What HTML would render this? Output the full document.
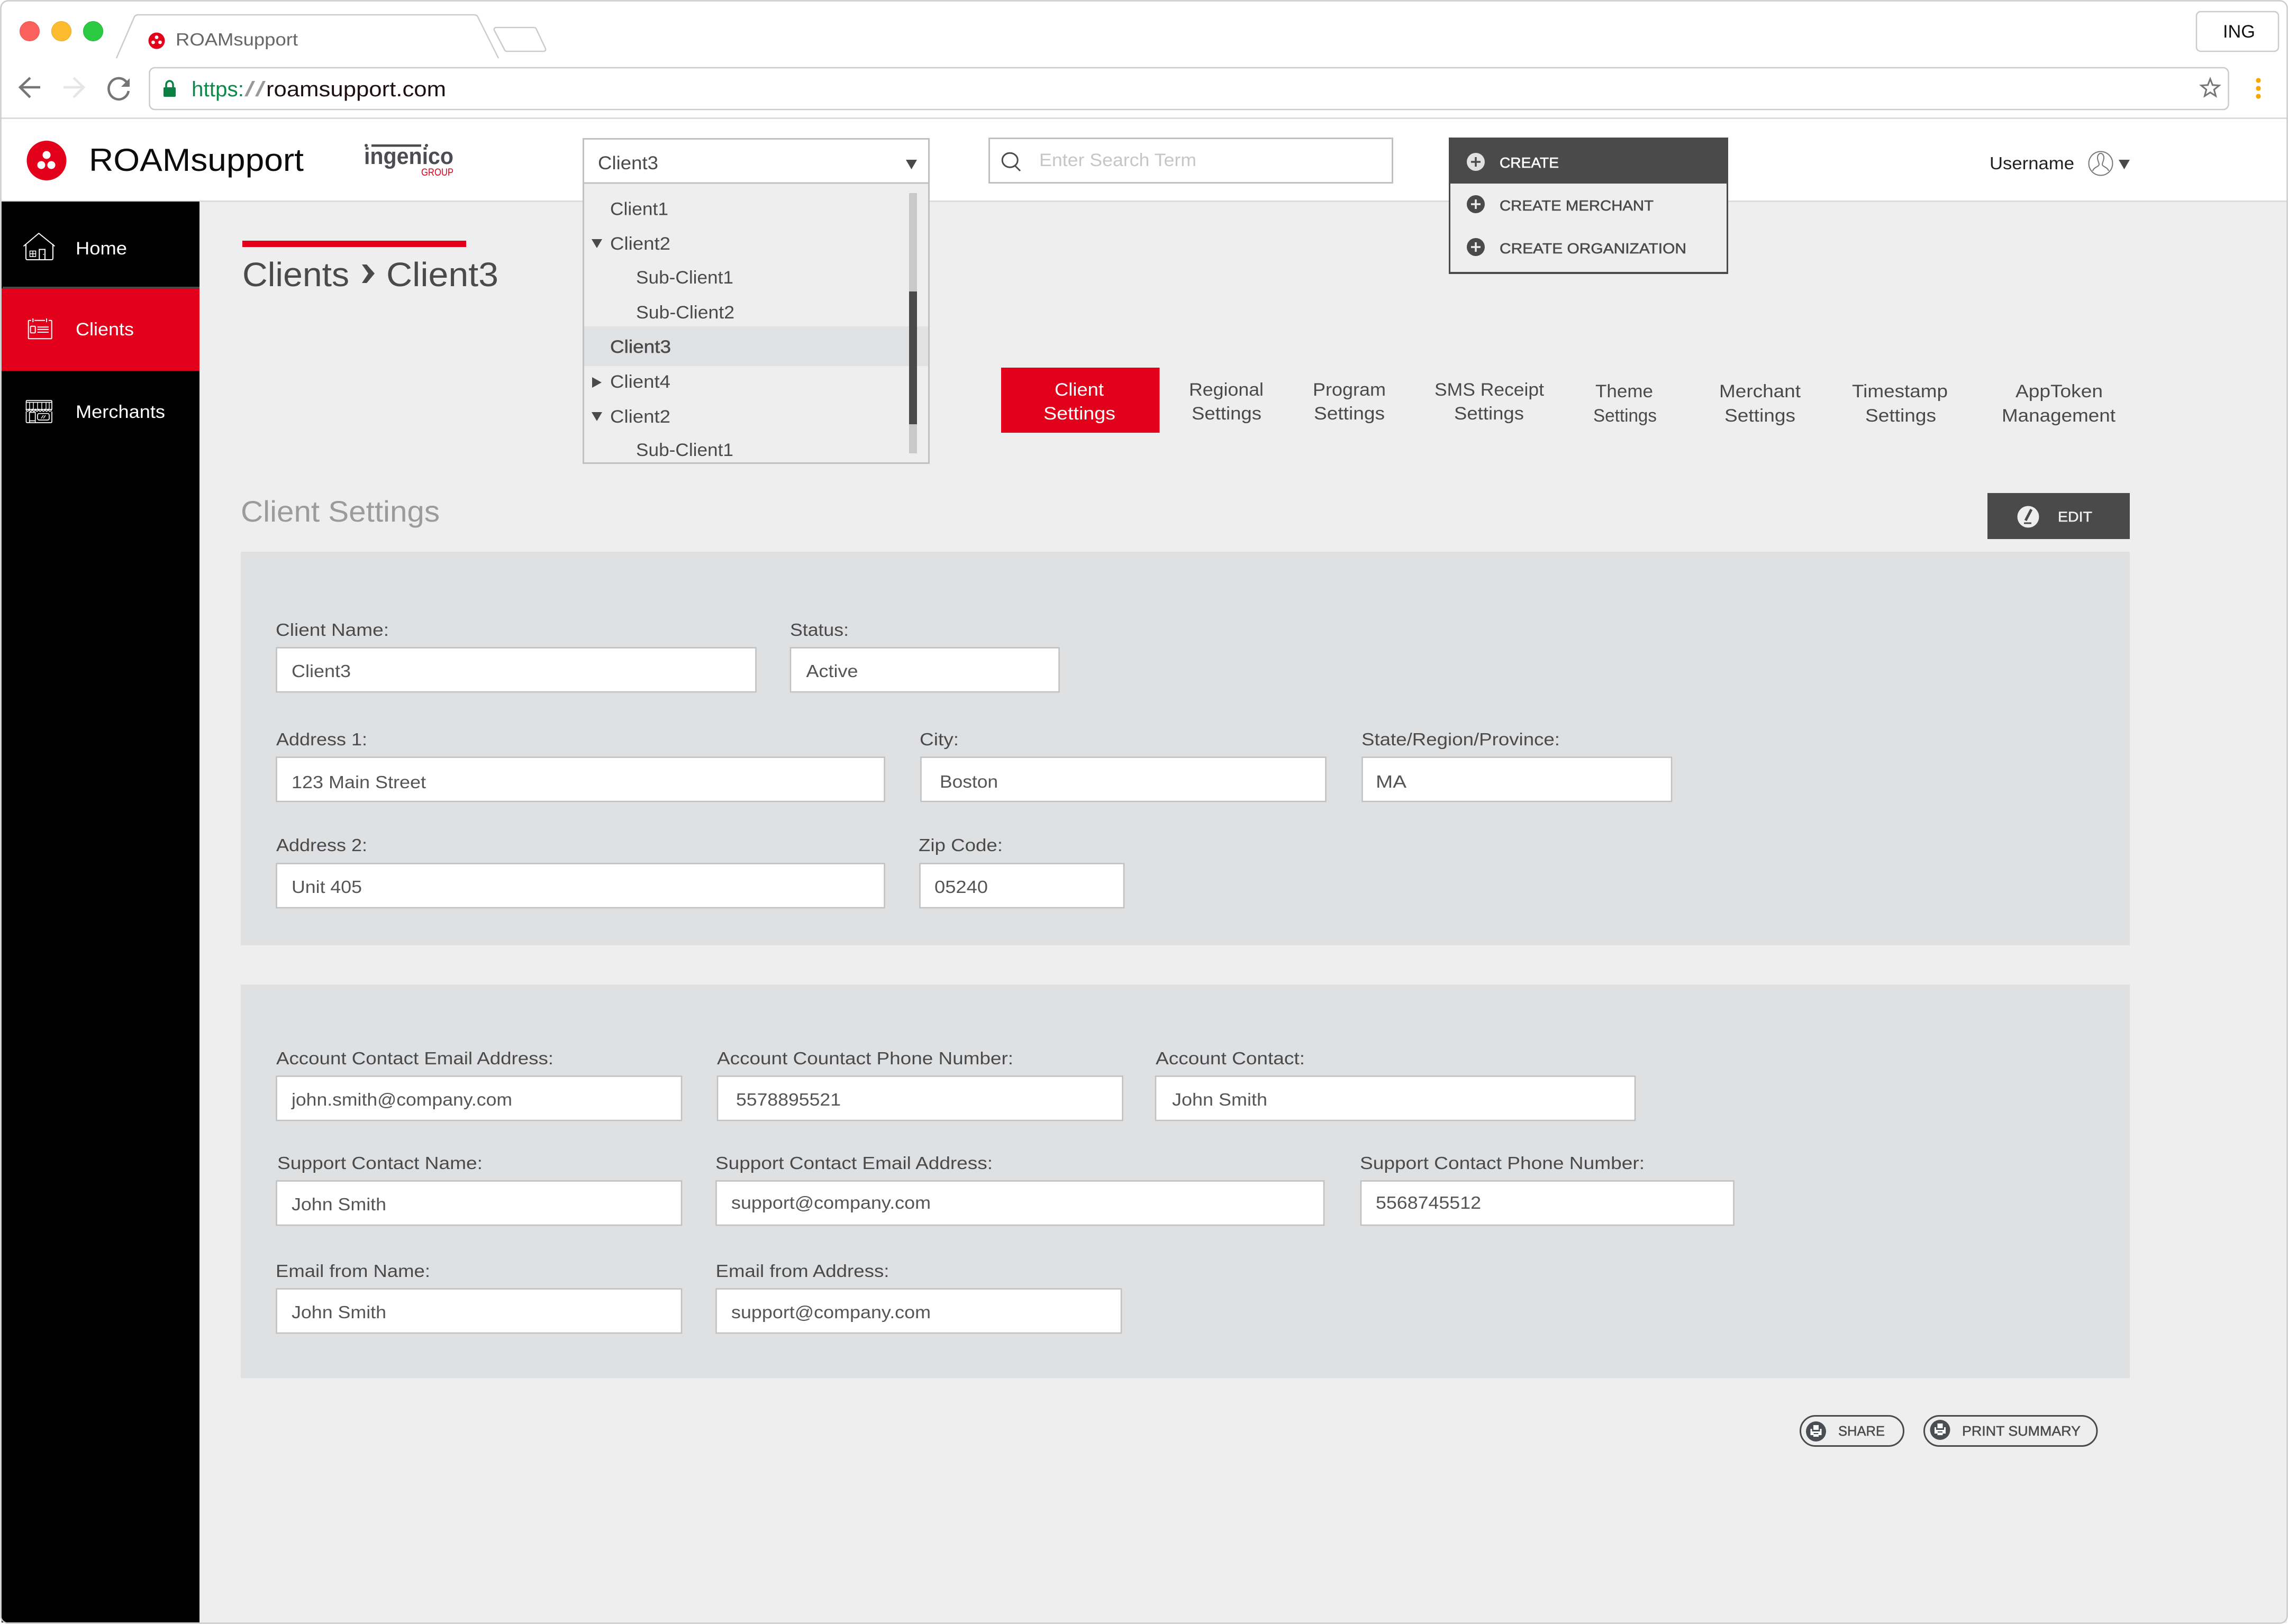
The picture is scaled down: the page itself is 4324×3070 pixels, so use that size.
<!DOCTYPE html>
<html lang="en"><head><meta charset="utf-8"><title>ROAMsupport</title>
<style>
html,body{margin:0;padding:0;background:#fff;width:4324px;height:3070px;overflow:hidden}
svg{display:block}
text{font-family:"Liberation Sans",sans-serif;fill:#4a4a4a;font-size:33px}
.v{fill:#555}
.i{fill:#fff;stroke:#c0c0c0;stroke-width:2.5}
.n{fill:#fff;font-size:34px}
.tb{font-size:34px;text-anchor:start}
.c{font-size:28px;stroke:#4a4a4a;stroke-width:.6}
.w{fill:none;stroke:#fff;stroke-width:2}
</style></head><body>
<svg xmlns="http://www.w3.org/2000/svg" width="4324" height="3070" viewBox="0 0 4324 3070">
<rect width="4324" height="3070" fill="#fff"/>
<!-- main -->
<rect x="377" y="380" width="3945" height="2688" fill="#eeeeee"/>
<rect x="3" y="379" width="4319" height="3" fill="#dcdcdc"/>
<rect x="3" y="381" width="374" height="2686" fill="#000"/>
<rect x="0" y="222" width="4324" height="3" fill="#dcdcdc"/>
<rect x="1.5" y="1.5" width="4321" height="3067" rx="14" fill="none" stroke="#cbcbcb" stroke-width="2.5"/>
<!-- browser chrome -->
<circle cx="56" cy="59" r="18.5" fill="#fc615d" stroke="#e9564f" stroke-width="1"/>
<circle cx="116" cy="59" r="18.5" fill="#fdbc2e" stroke="#e8a825" stroke-width="1"/>
<circle cx="176" cy="59" r="18.5" fill="#2acb42" stroke="#24b03a" stroke-width="1"/>
<path d="M220 110L253 34Q255 28 261 28H896Q902 28 904 34L942 110" fill="none" stroke="#cbcbcb" stroke-width="2.5"/>
<path d="M934 57Q933 52 938 52H1009Q1013 52 1014 56L1031 92Q1032 97 1027 97H958Q954 97 953 93Z" fill="none" stroke="#cbcbcb" stroke-width="2.5"/>
<circle cx="296" cy="77" r="15.5" fill="#e2001a"/>
<circle cx="296" cy="70.5" r="3.4" fill="#fff"/><circle cx="289.5" cy="80" r="3.4" fill="#fff"/><circle cx="302.5" cy="80" r="3.4" fill="#fff"/>
<text x="332" y="86" style="font-size:33px;fill:#666" textLength="231" lengthAdjust="spacingAndGlyphs">ROAMsupport</text>
<rect x="4151" y="22" width="155" height="75" rx="8" fill="#fff" stroke="#cbcbcb" stroke-width="2.5"/>
<text x="4201" y="71" style="font-size:34px;fill:#111" textLength="61" lengthAdjust="spacingAndGlyphs">ING</text>
<path d="M76 165H40M57 147L38 165L57 184" fill="none" stroke="#757575" stroke-width="4.5"/>
<path d="M158 165H120M139 147L158 165L139 184" fill="none" stroke="#e6e6e6" stroke-width="4.5"/>
<path d="M239 155A19 20 0 1 0 243 172" fill="none" stroke="#757575" stroke-width="4.5"/>
<polygon points="245,148 245,164 229,164" fill="#757575"/>
<rect x="282.5" y="128" width="3929" height="79" rx="10" fill="#fff" stroke="#cbcbcb" stroke-width="2.5"/>
<rect x="309" y="165" width="23" height="18" rx="2" fill="#0b8043"/>
<path d="M314 166V160A6.5 7 0 0 1 327 160V166" fill="none" stroke="#0b8043" stroke-width="3.5"/>
<text x="362" y="182" style="font-size:40px;fill:#0b8a4a" textLength="99" lengthAdjust="spacingAndGlyphs">https:</text>
<text x="462" y="182" style="font-size:40px;fill:#999" textLength="40" lengthAdjust="spacingAndGlyphs">//</text>
<text x="503" y="182" style="font-size:40px;fill:#1c1012" textLength="340" lengthAdjust="spacingAndGlyphs">roamsupport.com</text>
<polygon points="4177,149.2 4181.5,160.8 4194,161.5 4184.3,169.4 4187.5,181.5 4177,174.7 4166.5,181.5 4169.7,169.4 4160,161.5 4172.5,160.8" fill="#fff" stroke="#757575" stroke-width="3"/>
<circle cx="4268" cy="152" r="4.6" fill="#f5a800"/><circle cx="4268" cy="167" r="4.6" fill="#f5a800"/><circle cx="4268" cy="182" r="4.6" fill="#f5a800"/>
<!-- header -->
<circle cx="88" cy="303.5" r="37.5" fill="#e2001a"/>
<circle cx="88" cy="293" r="7.5" fill="#fff"/><circle cx="78" cy="312" r="7.5" fill="#fff"/><circle cx="97" cy="312" r="7.5" fill="#fff"/>
<text x="168" y="323" style="font-size:60px;fill:#0c0c0c" textLength="406" lengthAdjust="spacingAndGlyphs">ROAMsupport</text>
<rect x="702" y="273" width="94" height="4.5" fill="#4b4d52"/><circle cx="692" cy="275" r="3" fill="#4b4d52"/><circle cx="806" cy="275" r="3" fill="#4b4d52"/>
<text x="688" y="310" style="font-size:44px;font-weight:bold;fill:#4b4d52" textLength="169" lengthAdjust="spacingAndGlyphs">ingenico</text>
<text x="796" y="332" style="font-size:19px;fill:#e2001a" textLength="61" lengthAdjust="spacingAndGlyphs">GROUP</text>
<!-- search -->
<rect x="1869.5" y="261.5" width="762" height="84" fill="#fff" stroke="#c0c0c0" stroke-width="3"/>
<ellipse cx="1908.7" cy="302.7" rx="14.5" ry="13.5" fill="none" stroke="#4a4a4a" stroke-width="3"/>
<line x1="1918" y1="313" x2="1928" y2="323" stroke="#4a4a4a" stroke-width="3"/>
<text x="1964" y="314" style="font-size:34px;fill:#c6c6c6" textLength="297" lengthAdjust="spacingAndGlyphs">Enter Search Term</text>
<!-- create menu -->
<rect x="2739.5" y="261.5" width="525" height="255" fill="#eeeeee" stroke="#4a4a4a" stroke-width="3"/>
<rect x="2738" y="260" width="528" height="87" fill="#4a4a4a"/>
<rect x="2738" y="514" width="528" height="4" fill="#4a4a4a"/>
<circle cx="2789" cy="306" r="17" fill="#e0e1e3"/><path d="M2780 306h18M2789 297v18" stroke="#4a4a4a" stroke-width="3.5"/>
<text x="2834" y="317" style="fill:#fff;font-size:28px;stroke:#fff;stroke-width:.6" textLength="112" lengthAdjust="spacingAndGlyphs">CREATE</text>
<circle cx="2789" cy="386" r="17" fill="#4a4a4a"/><path d="M2780 386h18M2789 377v18" stroke="#eee" stroke-width="3.5"/>
<text class="c" x="2834" y="398" textLength="291" lengthAdjust="spacingAndGlyphs">CREATE MERCHANT</text>
<circle cx="2789" cy="467" r="17" fill="#4a4a4a"/><path d="M2780 467h18M2789 458v18" stroke="#eee" stroke-width="3.5"/>
<text class="c" x="2834" y="479" textLength="353" lengthAdjust="spacingAndGlyphs">CREATE ORGANIZATION</text>
<!-- username -->
<text x="3760" y="320" style="font-size:33px;fill:#222" textLength="160" lengthAdjust="spacingAndGlyphs">Username</text>
<circle cx="3970" cy="309" r="22.5" fill="none" stroke="#777" stroke-width="2"/>
<path d="M3964 298a6 8 0 0 1 12 0c0 6-3 9-3 13c0 4 10 5 12 12M3964 298c0 6 3 9 3 13c0 4-10 5-12 12" fill="none" stroke="#777" stroke-width="2"/>
<polygon points="4004,302 4025,302 4014.5,320" fill="#4a4a4a"/>
<!-- sidebar -->
<rect x="5" y="542" width="372" height="3" fill="#4a4a4a"/>
<rect x="3" y="545" width="374" height="156" fill="#e2001a"/>
<path class="w" d="M44.5 465.5L73.3 441L103.5 465.5M49 461V488Q49 491 52 491H97Q100 491 100 488V461M74.3 491V471.5H85V491"/>
<path class="w" d="M56.5 474.5h11v10.5h-11zM62 474.5v10.5M56.5 479.7h11" style="stroke-width:1.5"/>
<circle cx="82.3" cy="480.7" r="1" fill="#fff"/>
<text class="n" x="143" y="481" textLength="97" lengthAdjust="spacingAndGlyphs">Home</text>
<path class="w" d="M59 605.7H55Q53.7 605.7 53.7 607V639Q53.7 640.3 55 640.3H96.4Q97.7 640.3 97.7 639V607Q97.7 605.7 96.4 605.7H92M65 605.7H85M62.3 602V609M88 602V609"/>
<rect class="w" x="57.7" y="616.7" width="9" height="12.6" rx="1.5"/>
<path class="w" d="M70.7 618.3H92M70.7 622.7H92M70.7 628H92" />
<text class="n" x="143" y="634" textLength="110" lengthAdjust="spacingAndGlyphs">Clients</text>
<path class="w" d="M49.5 774V759Q49.5 757 51.5 757H96Q98 757 98 759V774M49 774Q52 781 55 774Q58 781 61 774Q64 781 67 774Q70 781 73 774Q76 781 79 774Q82 781 85 774Q88 781 91 774Q94 781 98 774M49 774H98M49 760.5H98" style="stroke-width:1.7"/>
<path class="w" d="M56 761V774M63 761V774M71 761V774M79 761V774M87 761V774M93 761V774" style="stroke-width:1.4"/>
<path class="w" d="M49.5 778V797Q49.5 799 51.5 799H96Q98 799 98 797V778M55.7 799V779.5H66.7V799M55.7 795.5H66.7" style="stroke-width:1.7"/>
<rect class="w" x="71" y="781.7" width="22" height="12.3" rx="3" style="stroke-width:1.7"/>
<path class="w" d="M78 791L82 785M82 791L86 785" style="stroke-width:1.4"/>
<text class="n" x="143" y="790" textLength="169" lengthAdjust="spacingAndGlyphs">Merchants</text>
<!-- title -->
<rect x="458" y="455" width="423" height="12" fill="#e2001a"/>
<text x="458" y="541" style="font-size:64px" textLength="202" lengthAdjust="spacingAndGlyphs">Clients</text>
<polygon points="684,500 693,500 708,517 693,535 684,535 696,517" fill="#4a4a4a"/>
<text x="730" y="541" style="font-size:64px" textLength="212" lengthAdjust="spacingAndGlyphs">Client3</text>
<text x="455" y="986" style="font-size:56px;fill:#9b9b9b" textLength="376" lengthAdjust="spacingAndGlyphs">Client Settings</text>
<!-- tabs -->
<rect x="1892" y="695" width="299.5" height="123" fill="#e2001a"/>
<text x="1993" y="748" style="font-size:34px;fill:#fff" textLength="93" lengthAdjust="spacingAndGlyphs">Client</text>
<text x="1972" y="793" style="font-size:34px;fill:#fff" textLength="136" lengthAdjust="spacingAndGlyphs">Settings</text>
<text class="tb" x="2247" y="748" textLength="141" lengthAdjust="spacingAndGlyphs">Regional</text>
<text class="tb" x="2252" y="793" textLength="132" lengthAdjust="spacingAndGlyphs">Settings</text>
<text class="tb" x="2481" y="748" textLength="138" lengthAdjust="spacingAndGlyphs">Program</text>
<text class="tb" x="2483" y="793" textLength="134" lengthAdjust="spacingAndGlyphs">Settings</text>
<text class="tb" x="2711" y="748" textLength="207" lengthAdjust="spacingAndGlyphs">SMS Receipt</text>
<text class="tb" x="2748" y="793" textLength="132" lengthAdjust="spacingAndGlyphs">Settings</text>
<text class="tb" x="3015" y="751" textLength="109" lengthAdjust="spacingAndGlyphs">Theme</text>
<text class="tb" x="3011" y="797" textLength="120" lengthAdjust="spacingAndGlyphs">Settings</text>
<text class="tb" x="3249" y="751" textLength="154" lengthAdjust="spacingAndGlyphs">Merchant</text>
<text class="tb" x="3259" y="797" textLength="134" lengthAdjust="spacingAndGlyphs">Settings</text>
<text class="tb" x="3500" y="751" textLength="181" lengthAdjust="spacingAndGlyphs">Timestamp</text>
<text class="tb" x="3525" y="797" textLength="134" lengthAdjust="spacingAndGlyphs">Settings</text>
<text class="tb" x="3809" y="751" textLength="165" lengthAdjust="spacingAndGlyphs">AppToken</text>
<text class="tb" x="3783" y="797" textLength="215" lengthAdjust="spacingAndGlyphs">Management</text>
<!-- edit -->
<rect x="3756" y="932" width="269" height="87" fill="#4a4a4a"/>
<circle cx="3833" cy="977" r="20.5" fill="#eee"/>
<path d="M3839 963L3828 984" stroke="#4a4a4a" stroke-width="5"/><path d="M3825 989H3839" stroke="#4a4a4a" stroke-width="3"/>
<text x="3889" y="986" style="font-size:27px;fill:#eee;stroke:#eee;stroke-width:.6" textLength="65" lengthAdjust="spacingAndGlyphs">EDIT</text>
<!-- panel 1 -->
<rect x="455" y="1043" width="3570" height="744" fill="#dfe0e2"/>
<text x="521" y="1202" textLength="214" lengthAdjust="spacingAndGlyphs">Client Name:</text>
<rect class="i" x="522.5" y="1224.5" width="906" height="83.5"/>
<text class="v" x="551" y="1280" textLength="112" lengthAdjust="spacingAndGlyphs">Client3</text>
<text x="1493" y="1202" textLength="111" lengthAdjust="spacingAndGlyphs">Status:</text>
<rect class="i" x="1494" y="1224.5" width="507.5" height="83.5"/>
<text class="v" x="1523.5" y="1280" textLength="98" lengthAdjust="spacingAndGlyphs">Active</text>
<text x="522" y="1409" textLength="172" lengthAdjust="spacingAndGlyphs">Address 1:</text>
<rect class="i" x="522.5" y="1431.5" width="1149" height="83.5"/>
<text class="v" x="551" y="1490" textLength="254" lengthAdjust="spacingAndGlyphs">123 Main Street</text>
<text x="1738" y="1409" textLength="74" lengthAdjust="spacingAndGlyphs">City:</text>
<rect class="i" x="1740.5" y="1431.5" width="765" height="83.5"/>
<text class="v" x="1776" y="1489" textLength="110" lengthAdjust="spacingAndGlyphs">Boston</text>
<text x="2573" y="1409" textLength="375" lengthAdjust="spacingAndGlyphs">State/Region/Province:</text>
<rect class="i" x="2574.5" y="1431.5" width="584.5" height="83.5"/>
<text class="v" x="2600" y="1489" textLength="58" lengthAdjust="spacingAndGlyphs">MA</text>
<text x="522" y="1609" textLength="172" lengthAdjust="spacingAndGlyphs">Address 2:</text>
<rect class="i" x="522.5" y="1632.5" width="1149" height="83.5"/>
<text class="v" x="551" y="1688" textLength="133" lengthAdjust="spacingAndGlyphs">Unit 405</text>
<text x="1736" y="1609" textLength="159" lengthAdjust="spacingAndGlyphs">Zip Code:</text>
<rect class="i" x="1738.5" y="1632.5" width="385.5" height="83.5"/>
<text class="v" x="1766" y="1688" textLength="101" lengthAdjust="spacingAndGlyphs">05240</text>
<!-- panel 2 -->
<rect x="455" y="1861.5" width="3570" height="744" fill="#dfe0e2"/>
<text x="522" y="2012" textLength="524" lengthAdjust="spacingAndGlyphs">Account Contact Email Address:</text>
<rect class="i" x="522.5" y="2034.5" width="765.5" height="83.5"/>
<text class="v" x="551" y="2090" textLength="417" lengthAdjust="spacingAndGlyphs">john.smith@company.com</text>
<text x="1355" y="2012" textLength="560" lengthAdjust="spacingAndGlyphs">Account Countact Phone Number:</text>
<rect class="i" x="1356" y="2034.5" width="765.5" height="83.5"/>
<text class="v" x="1391" y="2090" textLength="198" lengthAdjust="spacingAndGlyphs">5578895521</text>
<text x="2184" y="2012" textLength="282" lengthAdjust="spacingAndGlyphs">Account Contact:</text>
<rect class="i" x="2184" y="2034.5" width="906" height="83.5"/>
<text class="v" x="2215" y="2090" textLength="180" lengthAdjust="spacingAndGlyphs">John Smith</text>
<text x="524" y="2210" textLength="388" lengthAdjust="spacingAndGlyphs">Support Contact Name:</text>
<rect class="i" x="522.5" y="2232.5" width="765.5" height="83.5"/>
<text class="v" x="551" y="2288" textLength="179" lengthAdjust="spacingAndGlyphs">John Smith</text>
<text x="1352" y="2210" textLength="524" lengthAdjust="spacingAndGlyphs">Support Contact Email Address:</text>
<rect class="i" x="1353.5" y="2232.5" width="1148.5" height="83.5"/>
<text class="v" x="1382" y="2285" textLength="377" lengthAdjust="spacingAndGlyphs">support@company.com</text>
<text x="2570" y="2210" textLength="538" lengthAdjust="spacingAndGlyphs">Support Contact Phone Number:</text>
<rect class="i" x="2572" y="2232.5" width="704.5" height="83.5"/>
<text class="v" x="2600" y="2285" textLength="199" lengthAdjust="spacingAndGlyphs">5568745512</text>
<text x="521" y="2414" textLength="292" lengthAdjust="spacingAndGlyphs">Email from Name:</text>
<rect class="i" x="522.5" y="2436.5" width="765.5" height="83.5"/>
<text class="v" x="551" y="2492" textLength="179" lengthAdjust="spacingAndGlyphs">John Smith</text>
<text x="1352.5" y="2414" textLength="328" lengthAdjust="spacingAndGlyphs">Email from Address:</text>
<rect class="i" x="1353.5" y="2436.5" width="765.5" height="83.5"/>
<text class="v" x="1382" y="2492" textLength="377" lengthAdjust="spacingAndGlyphs">support@company.com</text>
<!-- footer buttons -->
<rect x="3402.5" y="2676.5" width="195" height="57" rx="28.5" fill="none" stroke="#4a4a4a" stroke-width="3"/>
<circle cx="3432" cy="2706" r="19" fill="#4a4d52"/>
<path d="M3427 2694h10v9h-10zM3421.5 2701h3v5h15v-5h3v12h-6v-4h-9v4h-6zM3427 2711h10v5h-10z" fill="#fff"/>
<text x="3474" y="2714" style="font-size:26px;stroke:#4a4a4a;stroke-width:.5" textLength="88" lengthAdjust="spacingAndGlyphs">SHARE</text>
<rect x="3636.5" y="2676.5" width="326.5" height="57" rx="28.5" fill="none" stroke="#4a4a4a" stroke-width="3"/>
<circle cx="3666.5" cy="2703" r="19" fill="#4a4d52"/>
<path d="M3661.5 2691h10v9h-10zM3656 2698h3v5h15v-5h3v12h-6v-4h-9v4h-6zM3661.5 2708h10v5h-10z" fill="#fff"/>
<text x="3708" y="2714" style="font-size:26px;stroke:#4a4a4a;stroke-width:.5" textLength="224" lengthAdjust="spacingAndGlyphs">PRINT SUMMARY</text>
<!-- client dropdown -->
<rect x="1102.5" y="262.5" width="653" height="613" fill="#eeeeee" stroke="#c0c0c0" stroke-width="3"/>
<rect x="1104" y="264" width="650" height="81" fill="#fff"/>
<rect x="1102" y="344.5" width="654" height="3" fill="#c0c0c0"/>
<rect x="1104" y="617" width="650" height="75" fill="#e1e2e4"/>
<rect x="1718" y="365" width="15" height="492" fill="#c8c9cb"/>
<rect x="1718" y="551" width="15" height="251" fill="#4a4a4a"/>
<text x="1130" y="320" style="font-size:35px" textLength="114" lengthAdjust="spacingAndGlyphs">Client3</text>
<polygon points="1712,302 1733,302 1722.5,320" fill="#4a4a4a"/>
<text x="1153" y="406.5" style="font-size:34px" textLength="110" lengthAdjust="spacingAndGlyphs">Client1</text>
<polygon points="1118,452 1138,452 1128,469" fill="#4a4a4a"/>
<text x="1153" y="472" style="font-size:34px" textLength="114" lengthAdjust="spacingAndGlyphs">Client2</text>
<text x="1202" y="536" style="font-size:34px" textLength="184" lengthAdjust="spacingAndGlyphs">Sub-Client1</text>
<text x="1202" y="602" style="font-size:34px" textLength="186" lengthAdjust="spacingAndGlyphs">Sub-Client2</text>
<text x="1153" y="667" style="font-size:34px;stroke:#4a4a4a;stroke-width:.5" textLength="115" lengthAdjust="spacingAndGlyphs">Client3</text>
<polygon points="1119,713 1137,723 1119,733" fill="#4a4a4a"/>
<text x="1153" y="733" style="font-size:34px" textLength="114" lengthAdjust="spacingAndGlyphs">Client4</text>
<polygon points="1118,779 1138,779 1128,796" fill="#4a4a4a"/>
<text x="1153" y="799" style="font-size:34px" textLength="114" lengthAdjust="spacingAndGlyphs">Client2</text>
<text x="1202" y="862" style="font-size:34px" textLength="184" lengthAdjust="spacingAndGlyphs">Sub-Client1</text>
</svg>
</body></html>
